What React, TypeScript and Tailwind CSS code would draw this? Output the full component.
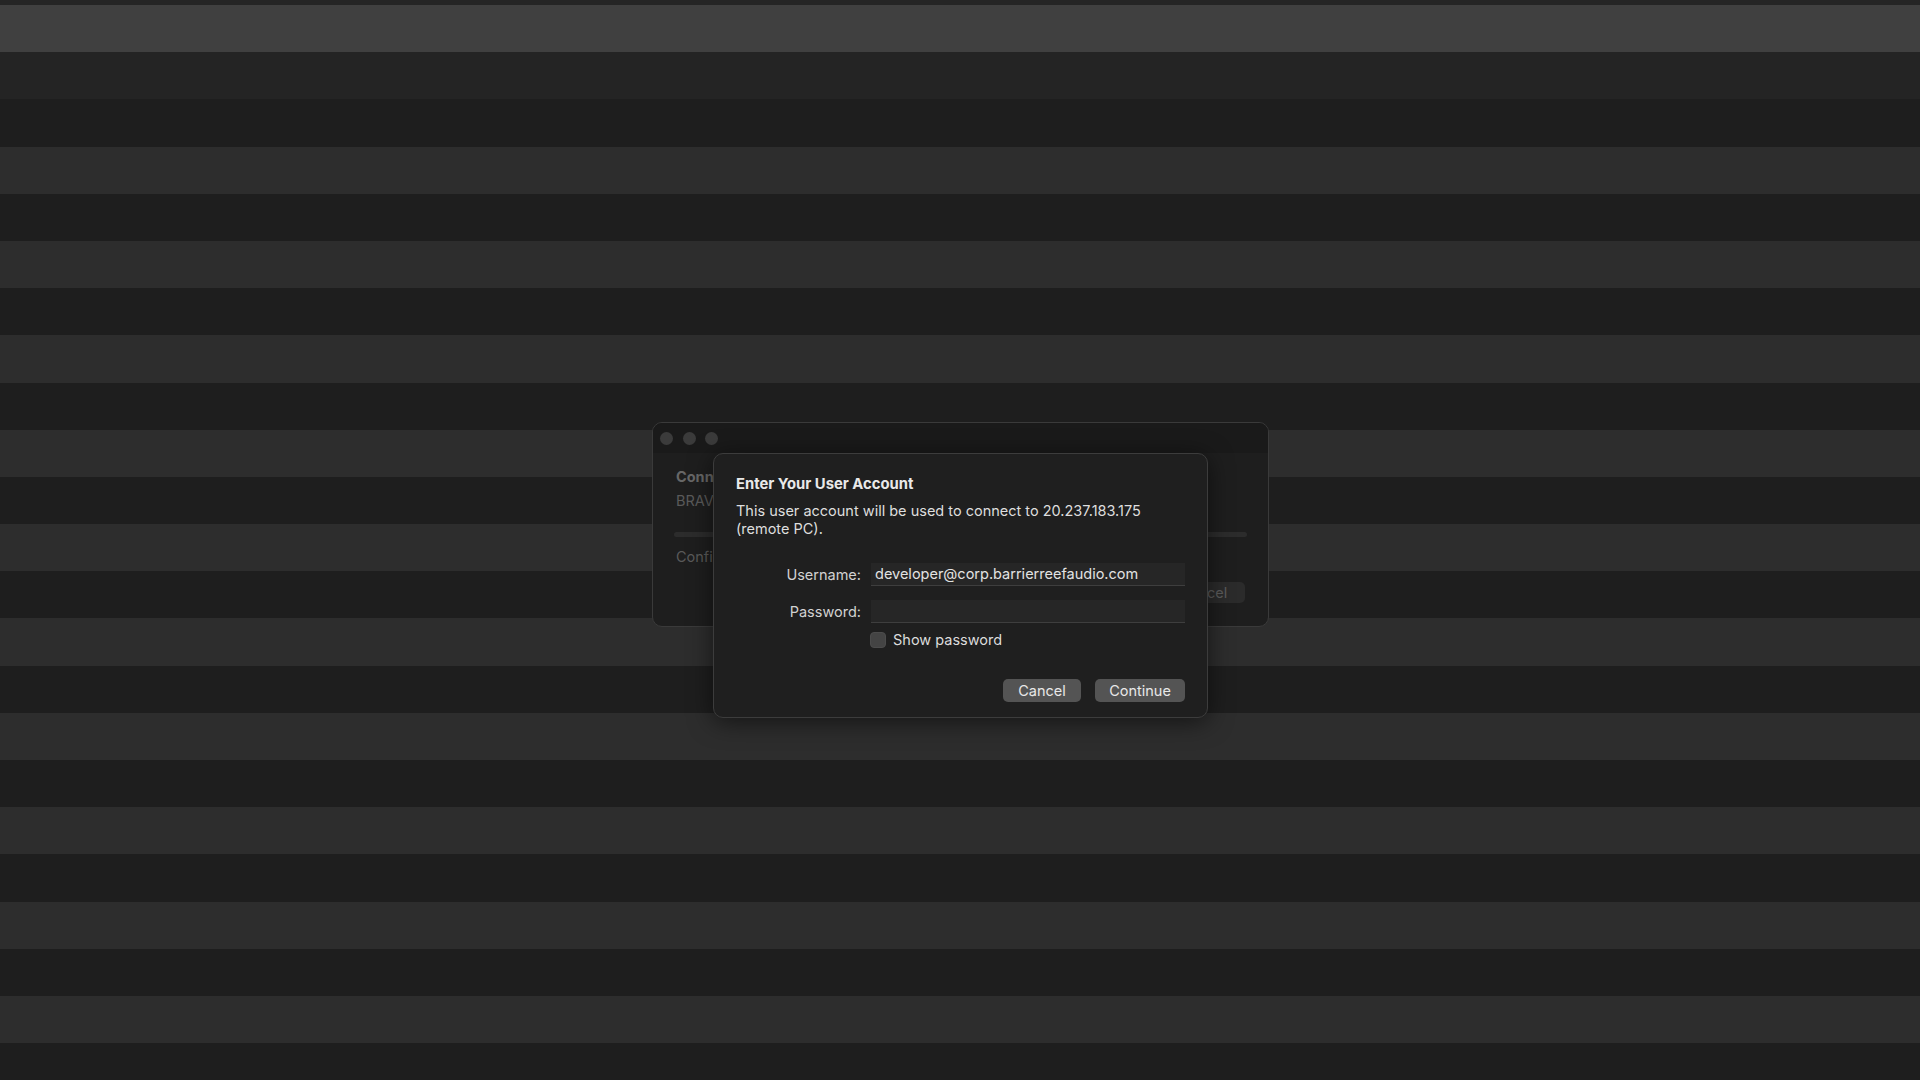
import React from 'react';

const font = { fontFamily: 'Inter, "Liberation Sans", sans-serif' };

// desktop stripes, top to bottom
const stripes = [
  'bg-[#404040]',
  'bg-[#242424]',
  ...Array.from({ length: 21 }, (_, i) => (i % 2 === 0 ? 'bg-[#1e1e1e]' : 'bg-[#2d2d2d]')),
];

const Field: React.FC<{ label: string; value?: string }> = ({ label, value }) => (
  <div className="flex items-center">
    <div className="w-[135px] pr-[10px] text-right text-[14.5px] text-[#d2d2d2]">{label}</div>
    <div className="flex-1 h-[23px] bg-[#262626] border-b border-[#3e3e3e] flex items-center px-[4px] text-[14.5px] text-[#e2e2e2]">
      {value}
    </div>
  </div>
);

export default function App() {
  return (
    <div className="relative w-[1920px] h-[1080px] overflow-hidden bg-[#1e1e1e]" style={font}>
      {/* striped desktop */}
      <div className="flex flex-col">
        <div className="h-[5px] bg-[#252525]" />
        {stripes.map((c, i) => (
          <div key={i} className={`h-[47.2px] shrink-0 ${c}`} />
        ))}
      </div>

      {/* background window, mostly hidden behind the sheet */}
      <div className="absolute left-[652px] top-[422px] w-[617px] h-[205px] rounded-[10px] border border-[#3a3a3a] bg-[#1e1e1e] overflow-hidden flex flex-col">
        <div className="h-[30px] bg-[#1a1a1a] flex items-center gap-[9.5px] pl-[7px]">
          <span className="w-[13px] h-[13px] rounded-full bg-[#3b3b3b]" />
          <span className="w-[13px] h-[13px] rounded-full bg-[#3b3b3b]" />
          <span className="w-[13px] h-[13px] rounded-full bg-[#3b3b3b]" />
        </div>
        <div className="flex flex-col px-[23px] pt-[15px]">
          <div className="w-[37px] overflow-hidden whitespace-nowrap text-[14.5px] font-bold text-[#676767] leading-[18px]">Connecting</div>
          <div className="w-[37px] overflow-hidden whitespace-nowrap mt-[6px] text-[14.5px] text-[#5a5a5a] leading-[18px]">BRAVO</div>
          <div className="mt-[22px] h-[5px] rounded-full bg-[#2c2c2c] mx-[-2px]" />
          <div className="w-[37px] overflow-hidden whitespace-nowrap mt-[11px] text-[14.5px] text-[#5a5a5a] leading-[18px]">Configuring</div>
          <div className="mt-[16px] flex justify-end">
            <div className="w-[40px] h-[21px] rounded-r-[5px] bg-[#2b2b2b] text-[14.5px] text-[#5c5c5c] flex items-center pl-[2px]">
              cel
            </div>
          </div>
        </div>
      </div>

      {/* sheet dialog */}
      <div className="absolute left-[713px] top-[453px] w-[495px] h-[265px] rounded-[10px] border border-[#3c3c3c] bg-[#1f1f1f] shadow-[0_4px_24px_rgba(0,0,0,0.55)] pt-[21px] pl-[22px] pr-[22px]">
        <div className="text-[14.8px] font-bold text-[#e9e9e9] leading-[18px]">Enter Your User Account</div>
        <div className="mt-[9px] text-[14.5px] text-[#dedede] leading-[18px]">
          This user account will be used to connect to 20.237.183.175
          <br />
          (remote PC).
        </div>

        <div className="mt-[25px] flex flex-col gap-[14px]">
          <Field label="Username:" value="developer@corp.barrierreefaudio.com" />
          <Field label="Password:" />
        </div>

        <div className="mt-[9px] ml-[134px] flex items-center gap-[7px]">
          <span className="w-[16px] h-[16px] rounded-[4px] bg-[#444444] border border-[#4c4c4c]" />
          <span className="text-[14.5px] text-[#dcdcdc] leading-[16px]">Show password</span>
        </div>

        <div className="mt-[31px] flex justify-end gap-[14px]">
          <button className="w-[78px] h-[23px] rounded-[5px] bg-[#545454] text-[14.5px] text-[#e8e8e8]">Cancel</button>
          <button className="w-[90px] h-[23px] rounded-[5px] bg-[#545454] text-[14.5px] text-[#e8e8e8]">Continue</button>
        </div>
      </div>
    </div>
  );
}
